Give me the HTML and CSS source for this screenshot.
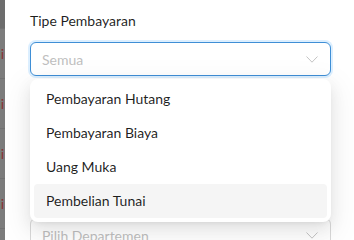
FILE: index.html
```html
<!DOCTYPE html>
<html lang="id">
<head>
<meta charset="utf-8">
<title>Tipe Pembayaran</title>
<link rel="stylesheet" href="styles.css">
</head>
<body>
<div class="page">
  <div class="backdrop">
    <div class="bd-head"></div>
    <div class="bd-row"><span class="bd-link">i</span></div>
    <div class="bd-row"><span class="bd-link">i</span></div>
    <div class="bd-row"><span class="bd-link">i</span></div>
    <div class="bd-row"><span class="bd-link">i</span></div>
    <div class="bd-row"></div>
  </div>
  <div class="panel">
    <div class="form-item">
      <div class="label">Tipe Pembayaran</div>
      <div class="select-wrap">
        <div class="select focused">
          <span class="placeholder">Semua</span>
          <svg class="chevron" width="12" height="7" viewBox="0 0 12 7"><path d="M0.5 0.5 L6 6.2 L11.5 0.5" fill="none" stroke="#c4c4c4" stroke-width="1"/></svg>
        </div>
        <div class="dropdown">
          <div class="option">Pembayaran Hutang</div>
          <div class="option">Pembayaran Biaya</div>
          <div class="option">Uang Muka</div>
          <div class="option active">Pembelian Tunai</div>
        </div>
      </div>
    </div>
    <div class="form-item covered">
      <div class="select">
        <span class="placeholder">Pilih Departemen</span>
        <svg class="chevron" width="12" height="7" viewBox="0 0 12 7"><path d="M0.5 0.5 L6 6.2 L11.5 0.5" fill="none" stroke="#c4c4c4" stroke-width="1"/></svg>
      </div>
    </div>
  </div>
</div>
</body>
</html>
```
FILE: styles.css
```css
html, body {
  margin: 0;
  padding: 0;
  background: #ffffff;
  overflow: hidden;
}
body {
  width: 354px;
  height: 240px;
  font-family: Lato, "Noto Sans", sans-serif;
  font-size: 14px;
  color: rgba(0, 0, 0, 0.88);
}
.page {
  display: flex;
  height: 240px;
  overflow: hidden;
}
.backdrop {
  width: 5px;
  flex: none;
  overflow: hidden;
  background: #7c7c7c;
  display: flex;
  flex-direction: column;
}
.bd-head {
  height: 28px;
  flex: none;
  background: #6d6d6d;
}
.bd-row {
  height: 49px;
  flex: none;
  border-top: 1px solid #727272;
  display: flex;
  align-items: center;
  justify-content: flex-end;
}
.bd-link {
  color: #8a3232;
  font-size: 14px;
  line-height: 1;
  margin-right: 1px;
}
.panel {
  flex: 1;
  background: #ffffff;
  padding: 10px 23px 0 25px;
  display: flex;
  flex-direction: column;
}
.form-item.covered {
  margin-top: 142px;
}
.label {
  line-height: 22px;
  margin-bottom: 10px;
  color: rgba(0, 0, 0, 0.88);
}
.select-wrap {
  position: relative;
}
.select {
  box-sizing: border-box;
  height: 34px;
  border: 1px solid #d9d9d9;
  border-radius: 6px;
  padding: 0 12px 0 11px;
  display: flex;
  align-items: center;
  justify-content: space-between;
  background: #ffffff;
}
.select.focused {
  border-color: #3f8fd6;
  box-shadow: 0 0 0 2px rgba(5, 145, 255, 0.14);
}
.placeholder {
  color: #bfbfbf;
}
.chevron {
  display: block;
  margin-top: 1px;
}
.dropdown {
  position: absolute;
  left: 0;
  right: 0;
  top: 37px;
  z-index: 10;
  background: #ffffff;
  border-radius: 8px;
  padding: 3px 4px 4px;
  box-shadow: 0 6px 16px 0 rgba(0, 0, 0, 0.08), 0 3px 6px -4px rgba(0, 0, 0, 0.12), 0 9px 28px 8px rgba(0, 0, 0, 0.05);
}
.option {
  height: 34px;
  line-height: 34px;
  padding: 0 12px;
  border-radius: 4px;
}
.option.active {
  background: #f5f5f5;
}
```
